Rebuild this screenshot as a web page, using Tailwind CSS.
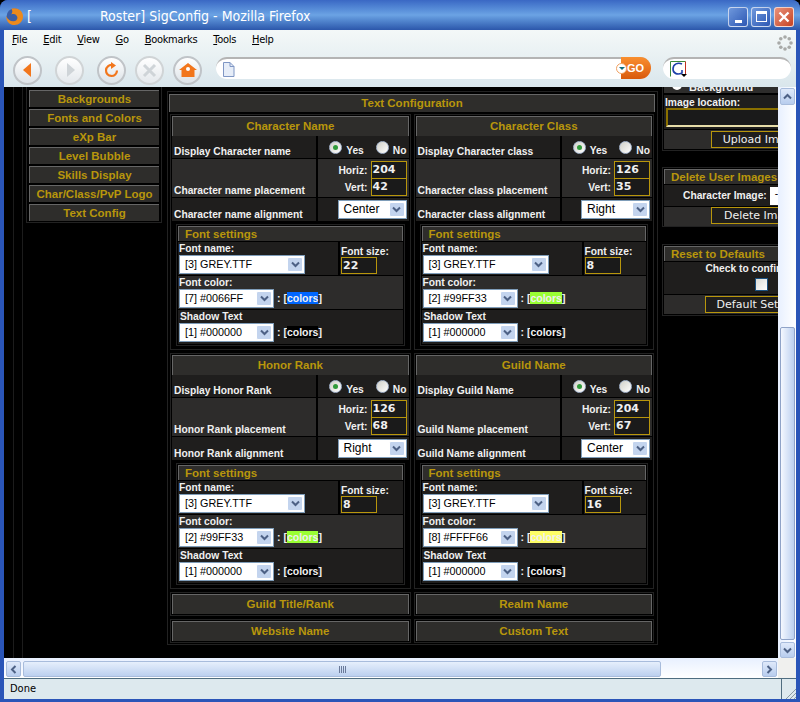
<!DOCTYPE html>
<html lang="en">
<head>
    <meta charset="UTF-8">
    <title>Roster SigConfig - Mozilla Firefox</title>
    <script src="https://cdn.jsdelivr.net/npm/@tailwindcss/browser@4"></script>
</head>
<body class="w-[800px] h-[702px] overflow-hidden bg-black font-['Liberation_Sans',sans-serif]">
<div class="w-[800px] h-[702px] flex flex-col overflow-hidden rounded-t-[8px] bg-[#2a55b8]">

    <!-- title bar -->
    <div class="h-[30px] shrink-0 flex items-center pt-[3px] pl-[6px] pr-[6px] bg-gradient-to-b from-[#3a68c4] via-[#6ba3e4] to-[#2c57ab]">
        <svg class="w-[17px] h-[17px] mr-[4px]" viewBox="0 0 16 16">
            <circle cx="8" cy="8" r="7.5" fill="#3b5fa8"/>
            <path d="M5 .8 C9 -1 16 1.5 16 8 C16 13 12 16 8 16 C3.5 16 0 12.5 .2 7.5 C1.5 10.5 3.5 12.5 7 12.5 C10.5 12.5 12 9 9.5 6.5 C8.5 5.5 6.5 5.5 5 6 C6.5 4 6 2 5 .8Z" fill="#ec8a1e"/>
        </svg>
        <span class="text-[14px] text-white w-[73px] font-['DejaVu_Sans_Condensed','DejaVu_Sans',sans-serif]">[</span>
        <span class="text-[14px] text-white font-['DejaVu_Sans_Condensed','DejaVu_Sans',sans-serif]">Roster] SigConfig - Mozilla Firefox</span>
        <div class="ml-auto flex gap-[3px]">
            <div class="w-[20px] h-[20px] rounded-[3px] border border-white/70 bg-gradient-to-br from-[#6f98dc] to-[#2e58b4] flex items-end justify-center pb-[3px]"><div class="w-[7px] h-[3px] bg-white"></div></div>
            <div class="w-[20px] h-[20px] rounded-[3px] border border-white/70 bg-gradient-to-br from-[#6f98dc] to-[#2e58b4] flex items-center justify-center"><div class="w-[11px] h-[11px] border border-white border-t-[3px]"></div></div>
            <div class="w-[20px] h-[20px] rounded-[3px] border border-white/70 bg-gradient-to-br from-[#e8917a] to-[#c5411f] flex items-center justify-center">
                <svg class="w-[12px] h-[12px]" viewBox="0 0 12 12"><path d="M1.5 1.5 L10.5 10.5 M10.5 1.5 L1.5 10.5" stroke="#fff" stroke-width="2.4"/></svg>
            </div>
        </div>
    </div>

    <div class="h-[669px] shrink-0 mx-[4px] flex flex-col bg-[#dde9ee]">
        <!-- menu bar -->
        <div class="h-[25px] shrink-0 flex items-center pb-[4px] pl-[8px] gap-[16px] text-[11px] tracking-[-.3px] text-black bg-gradient-to-b from-[#f4f8f8] to-[#e9f1f3] font-['DejaVu_Sans_Condensed','DejaVu_Sans',sans-serif]">
            <span><u>F</u>ile</span>
            <span><u>E</u>dit</span>
            <span><u>V</u>iew</span>
            <span><u>G</u>o</span>
            <span><u>B</u>ookmarks</span>
            <span><u>T</u>ools</span>
            <span><u>H</u>elp</span>
            <svg class="ml-auto mr-[3px] mt-[4px] w-[16px] h-[16px]" viewBox="0 0 16 16" fill="#a8aaa8"><circle cx="8" cy="2" r="1.8"/><circle cx="12.2" cy="3.8" r="1.8"/><circle cx="14" cy="8" r="1.8"/><circle cx="12.2" cy="12.2" r="1.8"/><circle cx="8" cy="14" r="1.8"/><circle cx="3.8" cy="12.2" r="1.8"/><circle cx="2" cy="8" r="1.8"/><circle cx="3.8" cy="3.8" r="1.8"/></svg>
        </div>

        <!-- nav toolbar -->
        <div class="h-[32px] shrink-0 flex items-center pb-[2px] pl-[9px] bg-gradient-to-b from-[#e9f1f3] to-[#d9e6ec]">
            <div class="w-[29px] h-[29px] rounded-full border-2 border-[#c0c4c8] bg-gradient-to-b from-white to-[#dde3e8] flex items-center justify-center">
                <svg class="w-[14px] h-[16px]" viewBox="0 0 14 16"><path d="M10 1 V15 L2 8Z" fill="#f2761c"/></svg>
            </div>
            <div class="ml-[13px] w-[29px] h-[29px] rounded-full border-2 border-[#d0d4d6] bg-gradient-to-b from-white to-[#e4e8ec] flex items-center justify-center">
                <svg class="w-[14px] h-[16px]" viewBox="0 0 14 16"><path d="M4 1 V15 L12 8Z" fill="#cfd4d8"/></svg>
            </div>
            <div class="ml-[13px] w-[29px] h-[29px] rounded-full border-2 border-[#c0c4c8] bg-gradient-to-b from-white to-[#dde3e8] flex items-center justify-center">
                <svg class="w-[17px] h-[17px]" viewBox="0 0 17 17" fill="none"><path d="M14 8.5 A5.5 5.5 0 1 1 9 3" stroke="#f2761c" stroke-width="2.2"/><path d="M8 0 L13 3.5 L8 7Z" fill="#f2761c"/></svg>
            </div>
            <div class="ml-[9px] w-[29px] h-[29px] rounded-full border-2 border-[#d0d4d6] bg-gradient-to-b from-white to-[#e4e8ec] flex items-center justify-center">
                <svg class="w-[15px] h-[15px]" viewBox="0 0 15 15"><path d="M2 2 L13 13 M13 2 L2 13" stroke="#cfd4d8" stroke-width="3"/></svg>
            </div>
            <div class="ml-[9px] w-[29px] h-[29px] rounded-full border-2 border-[#c0c4c8] bg-gradient-to-b from-white to-[#dde3e8] flex items-center justify-center">
                <svg class="w-[18px] h-[16px]" viewBox="0 0 18 16"><path d="M9 1 L18 8 H15.5 V15 H2.5 V8 H0Z" fill="#f2761c"/><circle cx="9" cy="7" r="2" fill="#fff"/></svg>
            </div>
            <!-- address bar -->
            <div class="ml-[14px] self-start mt-[2px] w-[435px] h-[22px] rounded-[11px] bg-white border-t-2 border-[#b4b4b4] flex items-center pl-[6px] relative">
                <svg class="w-[13px] h-[15px]" viewBox="0 0 13 15"><path d="M1.5 .5 H8 L12 4.5 V14.5 H1.5Z" fill="#e6edf8" stroke="#7f96c4"/><path d="M8 .5 V4.5 H12" fill="none" stroke="#7f96c4"/></svg>
                <div class="absolute right-0 top-[-2px] h-[22px] w-[30px] rounded-r-[11px] bg-gradient-to-b from-[#f98f2f] to-[#d9590a] text-white text-[11px] font-bold flex items-center pl-[6px]">GO</div>
                <div class="absolute right-[24px] top-[4px] w-[11px] h-[11px] rounded-full bg-white border border-[#f2a060] flex items-center justify-center"><div class="border-x-[3px] border-x-transparent border-t-[3px] border-t-[#0d6d80]"></div></div>
            </div>
            <!-- search bar -->
            <div class="ml-[12px] self-start mt-[2px] w-[128px] h-[22px] rounded-[11px] bg-white border-t-2 border-[#b4b4b4] flex items-center pl-[7px]">
                <svg class="w-[17px] h-[17px]" viewBox="0 0 17 17" fill="none">
                    <path d="M.5 15.5 V.5 H15.5" stroke="#3a8a3a"/><path d="M15.5 .5 V13" stroke="#c03020"/>
                    <path d="M12 3 C8 1 3 3 3 8 C3 13 8 14 12 12 V9" stroke="#1c3fa8" stroke-width="1.6"/>
                    <path d="M11 13 H17 L14 16Z" fill="#000"/>
                </svg>
            </div>
        </div>

        <!-- page area with scrollbars -->
        <div class="h-[571px] shrink-0 flex">
            <div class="w-[774px] h-[571px] bg-black overflow-hidden flex">
                <!-- outer decorative table lines -->
                <div class="w-[10px] h-full ml-[9px] border-x border-[#1c1c1c] shrink-0"></div>
                <div class="shrink-0 ml-[3px] w-[136px] flex flex-col gap-[2px] self-start px-[2px] pt-[3px] pb-[1px] border-x border-b border-[#222] text-[11.5px] font-bold text-[#b8960c] text-center">
                    <div class="h-[17px] leading-[16px] bg-[#2e2d2b] border-t border-l border-[#666]">Backgrounds</div>
                    <div class="h-[17px] leading-[16px] bg-[#2e2d2b] border-t border-l border-[#666]">Fonts and Colors</div>
                    <div class="h-[17px] leading-[16px] bg-[#2e2d2b] border-t border-l border-[#666]">eXp Bar</div>
                    <div class="h-[17px] leading-[16px] bg-[#2e2d2b] border-t border-l border-[#666]">Level Bubble</div>
                    <div class="h-[17px] leading-[16px] bg-[#2e2d2b] border-t border-l border-[#666]">Skills Display</div>
                    <div class="h-[17px] leading-[16px] bg-[#2e2d2b] border-t border-l border-[#666]">Char/Class/PvP Logo</div>
                    <div class="h-[17px] leading-[16px] bg-[#2e2d2b] border-t border-l border-[#666]">Text Config</div>
                </div>

                <!-- text configuration panel -->
                <div class="shrink-0 ml-[5px] mt-[4px] w-[491px] h-[554px] border border-[#222] p-[1px] flex flex-col text-[#f0f0f0] text-[10.25px] leading-[13px] font-bold">
                    <div class="h-[18px] mt-[1px] mr-[1px] leading-[17px] text-center text-[11.5px] text-[#b8960c] bg-[#2e2d2b] border-t border-x border-[#666]">Text Configuration</div>
                    <div class="grid grid-cols-2 gap-x-[3px] mt-[2px] ml-[1px] mr-[2px]">

                        <!-- character name -->
                        <div class="h-[236px] border border-[#222] p-[1px]">
                            <div class="h-[20px] leading-[18px] text-center text-[11.5px] text-[#b8960c] bg-[#2e2d2b] border-t border-x border-[#666]">Character Name</div>
                            <div class="h-[22px] flex bg-[#1f1e1d]">
                                <div class="w-[146px] flex items-end pl-[2px] border-r-2 border-black whitespace-nowrap">Display Character name</div>
                                <div class="flex-1 flex items-center justify-end pr-[2px] gap-[4px]"><span class="w-[13px] h-[13px] rounded-full bg-gradient-to-br from-[#d0d0c8] to-white border border-[#a8b8d0] flex items-center justify-center"><span class="w-[5px] h-[5px] rounded-full bg-[#2f9a3a]"></span></span><span class="mt-[6px]">Yes</span><span class="ml-[8px] w-[13px] h-[13px] rounded-full bg-gradient-to-br from-[#d0d0c8] to-white border border-[#a8b8d0]"></span><span class="mt-[6px]">No</span></div>
                            </div>
                            <div class="h-[38px] flex bg-[#2d2c2b] mt-[1px]">
                                <div class="w-[146px] flex items-end pl-[2px] border-r-2 border-black whitespace-nowrap">Character name placement</div>
                                <div class="flex-1 flex flex-col items-end pt-[2px] pr-[2px]">
                                    <div class="flex items-center gap-[3px]"><span>Horiz:</span><span class="w-[36px] h-[18px] border border-[#b8960c] bg-[#1a1a1a] pl-[1px] text-[11px] leading-[16px] font-['DejaVu_Sans',sans-serif]">204</span></div>
                                    <div class="-mt-[1px] flex items-center gap-[3px]"><span>Vert:</span><span class="w-[36px] h-[18px] border border-[#b8960c] bg-[#1a1a1a] pl-[1px] text-[11px] leading-[16px] font-['DejaVu_Sans',sans-serif]">42</span></div>
                                </div>
                            </div>
                            <div class="h-[23px] flex bg-[#1f1e1d] mt-[1px]">
                                <div class="w-[146px] flex items-end pl-[2px] border-r-2 border-black whitespace-nowrap">Character name alignment</div>
                                <div class="flex-1 flex items-center justify-end pr-[2px]"><div class="w-[69px] h-[19px] bg-white border border-[#7f9db9] flex items-center justify-between pl-[5px] pr-[1px] text-[12px] font-normal text-black">Center<span class="w-[16px] h-[15px] rounded-[2px] border border-white bg-[#c3d4ee] text-[#4d6185] flex items-center justify-center"><svg class="w-[9px] h-[7px]" viewBox="0 0 9 7" fill="none"><path d="M1 1.5 L4.5 5 L8 1.5" stroke="currentColor" stroke-width="2"/></svg></span></div></div>
                            </div>
                            <div class="mx-[4px] mt-[3px] border border-[#222] p-[1px] bg-black">
                                <div class="h-[15px] leading-[14px] pl-[6px] text-[11.5px] text-[#b8960c] bg-[#2e2d2b] border-t border-x border-[#666]">Font settings</div>
                                <div class="h-[33px] flex bg-[#1f1e1d] mt-[1px]">
                                    <div class="w-[162px] pl-[1px] border-r-2 border-black">Font name:
                                        <div class="w-[126px] h-[19px] bg-white border border-[#7f9db9] flex items-center justify-between pl-[5px] pr-[1px] text-[10.8px] font-normal text-black">[3] GREY.TTF<span class="w-[16px] h-[15px] rounded-[2px] border border-white bg-[#c3d4ee] text-[#4d6185] flex items-center justify-center"><svg class="w-[9px] h-[7px]" viewBox="0 0 9 7" fill="none"><path d="M1 1.5 L4.5 5 L8 1.5" stroke="currentColor" stroke-width="2"/></svg></span></div>
                                    </div>
                                    <div class="pl-[1px] pt-[4px] leading-[11px]">Font size:<div class="w-[36px] h-[17px] border border-[#b8960c] bg-[#1a1a1a] pl-[1px] text-[11px] leading-[15px] font-['DejaVu_Sans',sans-serif]">22</div></div>
                                </div>
                                <div class="h-[33px] bg-[#2d2c2b] mt-[1px] pl-[1px]">Font color:
                                    <div class="flex items-center gap-[3px]"><div class="w-[95px] h-[19px] bg-white border border-[#7f9db9] flex items-center justify-between pl-[5px] pr-[1px] text-[10.8px] font-normal text-black">[7] #0066FF<span class="w-[16px] h-[15px] rounded-[2px] border border-white bg-[#c3d4ee] text-[#4d6185] flex items-center justify-center"><svg class="w-[9px] h-[7px]" viewBox="0 0 9 7" fill="none"><path d="M1 1.5 L4.5 5 L8 1.5" stroke="currentColor" stroke-width="2"/></svg></span></div><span class="text-[10.5px]">: [<span class="bg-[#0066ff]">colors</span>]</span></div>
                                </div>
                                <div class="h-[34px] bg-[#1f1e1d] mt-[1px] pl-[2px]">Shadow Text
                                    <div class="-ml-[1px] flex items-center gap-[3px]"><div class="w-[95px] h-[19px] bg-white border border-[#7f9db9] flex items-center justify-between pl-[5px] pr-[1px] text-[10.8px] font-normal text-black">[1] #000000<span class="w-[16px] h-[15px] rounded-[2px] border border-white bg-[#c3d4ee] text-[#4d6185] flex items-center justify-center"><svg class="w-[9px] h-[7px]" viewBox="0 0 9 7" fill="none"><path d="M1 1.5 L4.5 5 L8 1.5" stroke="currentColor" stroke-width="2"/></svg></span></div><span class="text-[10.5px]">: [<span class="bg-[#000000]">colors</span>]</span></div>
                                </div>
                            </div>
                        </div>

                        <!-- character class -->
                        <div class="h-[236px] border border-[#222] p-[1px]">
                            <div class="h-[20px] leading-[18px] text-center text-[11.5px] text-[#b8960c] bg-[#2e2d2b] border-t border-x border-[#666]">Character Class</div>
                            <div class="h-[22px] flex bg-[#1f1e1d]">
                                <div class="w-[146px] flex items-end pl-[2px] border-r-2 border-black whitespace-nowrap">Display Character class</div>
                                <div class="flex-1 flex items-center justify-end pr-[2px] gap-[4px]"><span class="w-[13px] h-[13px] rounded-full bg-gradient-to-br from-[#d0d0c8] to-white border border-[#a8b8d0] flex items-center justify-center"><span class="w-[5px] h-[5px] rounded-full bg-[#2f9a3a]"></span></span><span class="mt-[6px]">Yes</span><span class="ml-[8px] w-[13px] h-[13px] rounded-full bg-gradient-to-br from-[#d0d0c8] to-white border border-[#a8b8d0]"></span><span class="mt-[6px]">No</span></div>
                            </div>
                            <div class="h-[38px] flex bg-[#2d2c2b] mt-[1px]">
                                <div class="w-[146px] flex items-end pl-[2px] border-r-2 border-black whitespace-nowrap">Character class placement</div>
                                <div class="flex-1 flex flex-col items-end pt-[2px] pr-[2px]">
                                    <div class="flex items-center gap-[3px]"><span>Horiz:</span><span class="w-[36px] h-[18px] border border-[#b8960c] bg-[#1a1a1a] pl-[1px] text-[11px] leading-[16px] font-['DejaVu_Sans',sans-serif]">126</span></div>
                                    <div class="-mt-[1px] flex items-center gap-[3px]"><span>Vert:</span><span class="w-[36px] h-[18px] border border-[#b8960c] bg-[#1a1a1a] pl-[1px] text-[11px] leading-[16px] font-['DejaVu_Sans',sans-serif]">35</span></div>
                                </div>
                            </div>
                            <div class="h-[23px] flex bg-[#1f1e1d] mt-[1px]">
                                <div class="w-[146px] flex items-end pl-[2px] border-r-2 border-black whitespace-nowrap">Character class alignment</div>
                                <div class="flex-1 flex items-center justify-end pr-[2px]"><div class="w-[69px] h-[19px] bg-white border border-[#7f9db9] flex items-center justify-between pl-[5px] pr-[1px] text-[12px] font-normal text-black">Right<span class="w-[16px] h-[15px] rounded-[2px] border border-white bg-[#c3d4ee] text-[#4d6185] flex items-center justify-center"><svg class="w-[9px] h-[7px]" viewBox="0 0 9 7" fill="none"><path d="M1 1.5 L4.5 5 L8 1.5" stroke="currentColor" stroke-width="2"/></svg></span></div></div>
                            </div>
                            <div class="mx-[4px] mt-[3px] border border-[#222] p-[1px] bg-black">
                                <div class="h-[15px] leading-[14px] pl-[6px] text-[11.5px] text-[#b8960c] bg-[#2e2d2b] border-t border-x border-[#666]">Font settings</div>
                                <div class="h-[33px] flex bg-[#1f1e1d] mt-[1px]">
                                    <div class="w-[162px] pl-[1px] border-r-2 border-black">Font name:
                                        <div class="w-[126px] h-[19px] bg-white border border-[#7f9db9] flex items-center justify-between pl-[5px] pr-[1px] text-[10.8px] font-normal text-black">[3] GREY.TTF<span class="w-[16px] h-[15px] rounded-[2px] border border-white bg-[#c3d4ee] text-[#4d6185] flex items-center justify-center"><svg class="w-[9px] h-[7px]" viewBox="0 0 9 7" fill="none"><path d="M1 1.5 L4.5 5 L8 1.5" stroke="currentColor" stroke-width="2"/></svg></span></div>
                                    </div>
                                    <div class="pl-[1px] pt-[4px] leading-[11px]">Font size:<div class="w-[36px] h-[17px] border border-[#b8960c] bg-[#1a1a1a] pl-[1px] text-[11px] leading-[15px] font-['DejaVu_Sans',sans-serif]">8</div></div>
                                </div>
                                <div class="h-[33px] bg-[#2d2c2b] mt-[1px] pl-[1px]">Font color:
                                    <div class="flex items-center gap-[3px]"><div class="w-[95px] h-[19px] bg-white border border-[#7f9db9] flex items-center justify-between pl-[5px] pr-[1px] text-[10.8px] font-normal text-black">[2] #99FF33<span class="w-[16px] h-[15px] rounded-[2px] border border-white bg-[#c3d4ee] text-[#4d6185] flex items-center justify-center"><svg class="w-[9px] h-[7px]" viewBox="0 0 9 7" fill="none"><path d="M1 1.5 L4.5 5 L8 1.5" stroke="currentColor" stroke-width="2"/></svg></span></div><span class="text-[10.5px]">: [<span class="bg-[#99ff33]">colors</span>]</span></div>
                                </div>
                                <div class="h-[34px] bg-[#1f1e1d] mt-[1px] pl-[2px]">Shadow Text
                                    <div class="-ml-[1px] flex items-center gap-[3px]"><div class="w-[95px] h-[19px] bg-white border border-[#7f9db9] flex items-center justify-between pl-[5px] pr-[1px] text-[10.8px] font-normal text-black">[1] #000000<span class="w-[16px] h-[15px] rounded-[2px] border border-white bg-[#c3d4ee] text-[#4d6185] flex items-center justify-center"><svg class="w-[9px] h-[7px]" viewBox="0 0 9 7" fill="none"><path d="M1 1.5 L4.5 5 L8 1.5" stroke="currentColor" stroke-width="2"/></svg></span></div><span class="text-[10.5px]">: [<span class="bg-[#000000]">colors</span>]</span></div>
                                </div>
                            </div>
                        </div>

                        <!-- honor rank -->
                        <div class="h-[236px] mt-[3px] border border-[#222] p-[1px]">
                            <div class="h-[20px] leading-[18px] text-center text-[11.5px] text-[#b8960c] bg-[#2e2d2b] border-t border-x border-[#666]">Honor Rank</div>
                            <div class="h-[22px] flex bg-[#1f1e1d]">
                                <div class="w-[146px] flex items-end pl-[2px] border-r-2 border-black whitespace-nowrap">Display Honor Rank</div>
                                <div class="flex-1 flex items-center justify-end pr-[2px] gap-[4px]"><span class="w-[13px] h-[13px] rounded-full bg-gradient-to-br from-[#d0d0c8] to-white border border-[#a8b8d0] flex items-center justify-center"><span class="w-[5px] h-[5px] rounded-full bg-[#2f9a3a]"></span></span><span class="mt-[6px]">Yes</span><span class="ml-[8px] w-[13px] h-[13px] rounded-full bg-gradient-to-br from-[#d0d0c8] to-white border border-[#a8b8d0]"></span><span class="mt-[6px]">No</span></div>
                            </div>
                            <div class="h-[38px] flex bg-[#2d2c2b] mt-[1px]">
                                <div class="w-[146px] flex items-end pl-[2px] border-r-2 border-black whitespace-nowrap">Honor Rank placement</div>
                                <div class="flex-1 flex flex-col items-end pt-[2px] pr-[2px]">
                                    <div class="flex items-center gap-[3px]"><span>Horiz:</span><span class="w-[36px] h-[18px] border border-[#b8960c] bg-[#1a1a1a] pl-[1px] text-[11px] leading-[16px] font-['DejaVu_Sans',sans-serif]">126</span></div>
                                    <div class="-mt-[1px] flex items-center gap-[3px]"><span>Vert:</span><span class="w-[36px] h-[18px] border border-[#b8960c] bg-[#1a1a1a] pl-[1px] text-[11px] leading-[16px] font-['DejaVu_Sans',sans-serif]">68</span></div>
                                </div>
                            </div>
                            <div class="h-[23px] flex bg-[#1f1e1d] mt-[1px]">
                                <div class="w-[146px] flex items-end pl-[2px] border-r-2 border-black whitespace-nowrap">Honor Rank alignment</div>
                                <div class="flex-1 flex items-center justify-end pr-[2px]"><div class="w-[69px] h-[19px] bg-white border border-[#7f9db9] flex items-center justify-between pl-[5px] pr-[1px] text-[12px] font-normal text-black">Right<span class="w-[16px] h-[15px] rounded-[2px] border border-white bg-[#c3d4ee] text-[#4d6185] flex items-center justify-center"><svg class="w-[9px] h-[7px]" viewBox="0 0 9 7" fill="none"><path d="M1 1.5 L4.5 5 L8 1.5" stroke="currentColor" stroke-width="2"/></svg></span></div></div>
                            </div>
                            <div class="mx-[4px] mt-[3px] border border-[#222] p-[1px] bg-black">
                                <div class="h-[15px] leading-[14px] pl-[6px] text-[11.5px] text-[#b8960c] bg-[#2e2d2b] border-t border-x border-[#666]">Font settings</div>
                                <div class="h-[33px] flex bg-[#1f1e1d] mt-[1px]">
                                    <div class="w-[162px] pl-[1px] border-r-2 border-black">Font name:
                                        <div class="w-[126px] h-[19px] bg-white border border-[#7f9db9] flex items-center justify-between pl-[5px] pr-[1px] text-[10.8px] font-normal text-black">[3] GREY.TTF<span class="w-[16px] h-[15px] rounded-[2px] border border-white bg-[#c3d4ee] text-[#4d6185] flex items-center justify-center"><svg class="w-[9px] h-[7px]" viewBox="0 0 9 7" fill="none"><path d="M1 1.5 L4.5 5 L8 1.5" stroke="currentColor" stroke-width="2"/></svg></span></div>
                                    </div>
                                    <div class="pl-[1px] pt-[4px] leading-[11px]">Font size:<div class="w-[36px] h-[17px] border border-[#b8960c] bg-[#1a1a1a] pl-[1px] text-[11px] leading-[15px] font-['DejaVu_Sans',sans-serif]">8</div></div>
                                </div>
                                <div class="h-[33px] bg-[#2d2c2b] mt-[1px] pl-[1px]">Font color:
                                    <div class="flex items-center gap-[3px]"><div class="w-[95px] h-[19px] bg-white border border-[#7f9db9] flex items-center justify-between pl-[5px] pr-[1px] text-[10.8px] font-normal text-black">[2] #99FF33<span class="w-[16px] h-[15px] rounded-[2px] border border-white bg-[#c3d4ee] text-[#4d6185] flex items-center justify-center"><svg class="w-[9px] h-[7px]" viewBox="0 0 9 7" fill="none"><path d="M1 1.5 L4.5 5 L8 1.5" stroke="currentColor" stroke-width="2"/></svg></span></div><span class="text-[10.5px]">: [<span class="bg-[#99ff33]">colors</span>]</span></div>
                                </div>
                                <div class="h-[34px] bg-[#1f1e1d] mt-[1px] pl-[2px]">Shadow Text
                                    <div class="-ml-[1px] flex items-center gap-[3px]"><div class="w-[95px] h-[19px] bg-white border border-[#7f9db9] flex items-center justify-between pl-[5px] pr-[1px] text-[10.8px] font-normal text-black">[1] #000000<span class="w-[16px] h-[15px] rounded-[2px] border border-white bg-[#c3d4ee] text-[#4d6185] flex items-center justify-center"><svg class="w-[9px] h-[7px]" viewBox="0 0 9 7" fill="none"><path d="M1 1.5 L4.5 5 L8 1.5" stroke="currentColor" stroke-width="2"/></svg></span></div><span class="text-[10.5px]">: [<span class="bg-[#000000]">colors</span>]</span></div>
                                </div>
                            </div>
                        </div>

                        <!-- guild name -->
                        <div class="h-[236px] mt-[3px] border border-[#222] p-[1px]">
                            <div class="h-[20px] leading-[18px] text-center text-[11.5px] text-[#b8960c] bg-[#2e2d2b] border-t border-x border-[#666]">Guild Name</div>
                            <div class="h-[22px] flex bg-[#1f1e1d]">
                                <div class="w-[146px] flex items-end pl-[2px] border-r-2 border-black whitespace-nowrap">Display Guild Name</div>
                                <div class="flex-1 flex items-center justify-end pr-[2px] gap-[4px]"><span class="w-[13px] h-[13px] rounded-full bg-gradient-to-br from-[#d0d0c8] to-white border border-[#a8b8d0] flex items-center justify-center"><span class="w-[5px] h-[5px] rounded-full bg-[#2f9a3a]"></span></span><span class="mt-[6px]">Yes</span><span class="ml-[8px] w-[13px] h-[13px] rounded-full bg-gradient-to-br from-[#d0d0c8] to-white border border-[#a8b8d0]"></span><span class="mt-[6px]">No</span></div>
                            </div>
                            <div class="h-[38px] flex bg-[#2d2c2b] mt-[1px]">
                                <div class="w-[146px] flex items-end pl-[2px] border-r-2 border-black whitespace-nowrap">Guild Name placement</div>
                                <div class="flex-1 flex flex-col items-end pt-[2px] pr-[2px]">
                                    <div class="flex items-center gap-[3px]"><span>Horiz:</span><span class="w-[36px] h-[18px] border border-[#b8960c] bg-[#1a1a1a] pl-[1px] text-[11px] leading-[16px] font-['DejaVu_Sans',sans-serif]">204</span></div>
                                    <div class="-mt-[1px] flex items-center gap-[3px]"><span>Vert:</span><span class="w-[36px] h-[18px] border border-[#b8960c] bg-[#1a1a1a] pl-[1px] text-[11px] leading-[16px] font-['DejaVu_Sans',sans-serif]">67</span></div>
                                </div>
                            </div>
                            <div class="h-[23px] flex bg-[#1f1e1d] mt-[1px]">
                                <div class="w-[146px] flex items-end pl-[2px] border-r-2 border-black whitespace-nowrap">Guild Name alignment</div>
                                <div class="flex-1 flex items-center justify-end pr-[2px]"><div class="w-[69px] h-[19px] bg-white border border-[#7f9db9] flex items-center justify-between pl-[5px] pr-[1px] text-[12px] font-normal text-black">Center<span class="w-[16px] h-[15px] rounded-[2px] border border-white bg-[#c3d4ee] text-[#4d6185] flex items-center justify-center"><svg class="w-[9px] h-[7px]" viewBox="0 0 9 7" fill="none"><path d="M1 1.5 L4.5 5 L8 1.5" stroke="currentColor" stroke-width="2"/></svg></span></div></div>
                            </div>
                            <div class="mx-[4px] mt-[3px] border border-[#222] p-[1px] bg-black">
                                <div class="h-[15px] leading-[14px] pl-[6px] text-[11.5px] text-[#b8960c] bg-[#2e2d2b] border-t border-x border-[#666]">Font settings</div>
                                <div class="h-[33px] flex bg-[#1f1e1d] mt-[1px]">
                                    <div class="w-[162px] pl-[1px] border-r-2 border-black">Font name:
                                        <div class="w-[126px] h-[19px] bg-white border border-[#7f9db9] flex items-center justify-between pl-[5px] pr-[1px] text-[10.8px] font-normal text-black">[3] GREY.TTF<span class="w-[16px] h-[15px] rounded-[2px] border border-white bg-[#c3d4ee] text-[#4d6185] flex items-center justify-center"><svg class="w-[9px] h-[7px]" viewBox="0 0 9 7" fill="none"><path d="M1 1.5 L4.5 5 L8 1.5" stroke="currentColor" stroke-width="2"/></svg></span></div>
                                    </div>
                                    <div class="pl-[1px] pt-[4px] leading-[11px]">Font size:<div class="w-[36px] h-[17px] border border-[#b8960c] bg-[#1a1a1a] pl-[1px] text-[11px] leading-[15px] font-['DejaVu_Sans',sans-serif]">16</div></div>
                                </div>
                                <div class="h-[33px] bg-[#2d2c2b] mt-[1px] pl-[1px]">Font color:
                                    <div class="flex items-center gap-[3px]"><div class="w-[95px] h-[19px] bg-white border border-[#7f9db9] flex items-center justify-between pl-[5px] pr-[1px] text-[10.8px] font-normal text-black">[8] #FFFF66<span class="w-[16px] h-[15px] rounded-[2px] border border-white bg-[#c3d4ee] text-[#4d6185] flex items-center justify-center"><svg class="w-[9px] h-[7px]" viewBox="0 0 9 7" fill="none"><path d="M1 1.5 L4.5 5 L8 1.5" stroke="currentColor" stroke-width="2"/></svg></span></div><span class="text-[10.5px]">: [<span class="bg-[#ffff66]">colors</span>]</span></div>
                                </div>
                                <div class="h-[34px] bg-[#1f1e1d] mt-[1px] pl-[2px]">Shadow Text
                                    <div class="-ml-[1px] flex items-center gap-[3px]"><div class="w-[95px] h-[19px] bg-white border border-[#7f9db9] flex items-center justify-between pl-[5px] pr-[1px] text-[10.8px] font-normal text-black">[1] #000000<span class="w-[16px] h-[15px] rounded-[2px] border border-white bg-[#c3d4ee] text-[#4d6185] flex items-center justify-center"><svg class="w-[9px] h-[7px]" viewBox="0 0 9 7" fill="none"><path d="M1 1.5 L4.5 5 L8 1.5" stroke="currentColor" stroke-width="2"/></svg></span></div><span class="text-[10.5px]">: [<span class="bg-[#000000]">colors</span>]</span></div>
                                </div>
                            </div>
                        </div>

                        <!-- collapsed sections -->
                        <div class="h-[24px] mt-[3px] border border-[#222] p-[1px]"><div class="h-[20px] leading-[18px] text-center text-[11.5px] text-[#b8960c] bg-[#2e2d2b] border-t border-x border-[#666]">Guild Title/Rank</div></div>
                        <div class="h-[24px] mt-[3px] border border-[#222] p-[1px]"><div class="h-[20px] leading-[18px] text-center text-[11.5px] text-[#b8960c] bg-[#2e2d2b] border-t border-x border-[#666]">Realm Name</div></div>
                        <div class="h-[24px] mt-[3px] border border-[#222] p-[1px]"><div class="h-[20px] leading-[18px] text-center text-[11.5px] text-[#b8960c] bg-[#2e2d2b] border-t border-x border-[#666]">Website Name</div></div>
                        <div class="h-[24px] mt-[3px] border border-[#222] p-[1px]"><div class="h-[20px] leading-[18px] text-center text-[11.5px] text-[#b8960c] bg-[#2e2d2b] border-t border-x border-[#666]">Custom Text</div></div>
                    </div>
                </div>

                <!-- right column, runs off the scrollport -->
                <div class="shrink-0 ml-[4px] w-[198px] flex flex-col text-[#f0f0f0] text-[10.25px] leading-[13px] font-bold">
                    <div class="h-[64px] border-x border-b border-[#222] px-[1px]">
                        <div class="h-[6px] overflow-hidden bg-[#2d2c2b] flex items-end">
                            <span class="ml-[8px] mb-[3px] w-[10px] h-[10px] shrink-0 rounded-full bg-white"></span>
                            <span class="ml-[7px] -mb-[1px] text-[11px]">Background</span>
                        </div>
                        <div class="h-[34px] mt-[2px] bg-[#1f1e1d] pt-[2px] pl-[1px] leading-[11px]">Image location:
                            <div class="h-[19px] ml-[1px] border-2 border-[#8a7000] border-b-[#e6dca8] border-r-[#e6dca8] bg-[#1a1a1a]"></div>
                        </div>
                        <div class="h-[19px] mt-[1px] bg-[#2d2c2b] flex justify-center pt-[1px]"><div class="w-[100px] h-[17px] border border-[#b8960c] bg-[#1f1e1d] text-[11px] font-normal leading-[15px] text-center font-['DejaVu_Sans',sans-serif]">Upload Image</div></div>
                    </div>
                    <div class="h-[60px] mt-[16px] border border-[#222] p-[1px]">
                        <div class="h-[15px] leading-[14px] pl-[6px] text-[11.5px] text-[#b8960c] bg-[#2e2d2b] border-t border-l border-[#666] whitespace-nowrap">Delete User Images</div>
                        <div class="h-[21px] mt-[1px] bg-[#1f1e1d] flex items-center pl-[19px] gap-[3px]">Character Image:<div class="w-[60px] h-[18px] bg-white text-black font-normal pl-[5px]">-</div></div>
                        <div class="h-[19px] mt-[1px] bg-[#2d2c2b] flex justify-center"><div class="w-[100px] h-[17px] border border-[#b8960c] bg-[#1f1e1d] text-[11px] font-normal leading-[15px] text-center font-['DejaVu_Sans',sans-serif]">Delete Image</div></div>
                    </div>
                    <div class="h-[72px] mt-[17px] border border-[#222] p-[1px]">
                        <div class="h-[15px] leading-[14px] pl-[6px] text-[11.5px] text-[#b8960c] bg-[#2e2d2b] border-t border-l border-[#666]">Reset to Defaults</div>
                        <div class="h-[32px] mt-[1px] bg-[#1f1e1d] flex flex-col items-center">Check to confirm reset
                            <div class="w-[13px] h-[13px] mt-[3px] border border-[#1c5180] bg-gradient-to-br from-[#dcdcd7] to-white"></div>
                        </div>
                        <div class="h-[19px] mt-[1px] bg-[#2d2c2b] flex justify-center pt-[1px]"><div class="w-[113px] h-[17px] border border-[#b8960c] bg-[#1f1e1d] text-[11px] font-normal leading-[15px] text-center font-['DejaVu_Sans',sans-serif]">Default Settings</div></div>
                    </div>
                </div>
            </div>

            <!-- vertical scrollbar -->
            <div class="w-[18px] h-[571px] bg-gradient-to-r from-[#e8f0ff] to-white flex flex-col items-center pt-[1px] pl-[1px]">
                <div class="w-[15px] h-[17px] rounded-[2px] border border-[#a8bcdc] bg-gradient-to-b from-[#dfe9fa] to-[#b8cdee] text-[#4d6185] flex items-center justify-center"><svg class="w-[9px] h-[7px]" viewBox="0 0 9 7" fill="none"><path d="M1 5.5 L4.5 2 L8 5.5" stroke="currentColor" stroke-width="2"/></svg></div>
                <div class="w-[15px] h-[313px] mt-[222px] rounded-[2px] border border-[#8fa3c8] bg-gradient-to-r from-[#f4f8ff] to-[#bcd0ef]"></div>
                <div class="w-[15px] h-[16px] mt-auto rounded-[2px] border border-[#a8bcdc] bg-gradient-to-b from-[#dfe9fa] to-[#b8cdee] text-[#4d6185] flex items-center justify-center"><svg class="w-[9px] h-[7px]" viewBox="0 0 9 7" fill="none"><path d="M1 1.5 L4.5 5 L8 1.5" stroke="currentColor" stroke-width="2"/></svg></div>
            </div>
        </div>

        <!-- horizontal scrollbar -->
        <div class="h-[20px] shrink-0 flex items-end bg-gradient-to-b from-[#e8f0ff] to-white">
            <div class="w-[15px] h-[16px] mb-[1px] ml-[2px] rounded-[2px] border border-[#a8bcdc] bg-gradient-to-b from-[#dfe9fa] to-[#b8cdee] text-[#4d6185] flex items-center justify-center"><svg class="w-[7px] h-[9px]" viewBox="0 0 7 9" fill="none"><path d="M5.5 1 L2 4.5 L5.5 8" stroke="currentColor" stroke-width="2"/></svg></div>
            <div class="w-[638px] h-[16px] mb-[1px] ml-[2px] rounded-[2px] border border-[#a8bcdc] bg-gradient-to-b from-[#e6effc] to-[#bcd0ef] flex items-center justify-center gap-[1px]"><span class="w-[1px] h-[7px] bg-[#6a7a9a]"></span><span class="w-[1px] h-[7px] bg-[#6a7a9a]"></span><span class="w-[1px] h-[7px] bg-[#6a7a9a]"></span><span class="w-[1px] h-[7px] bg-[#6a7a9a]"></span></div>
            <div class="w-[15px] h-[16px] mb-[1px] ml-auto mr-[1px] rounded-[2px] border border-[#a8bcdc] bg-gradient-to-b from-[#dfe9fa] to-[#b8cdee] text-[#4d6185] flex items-center justify-center"><svg class="w-[7px] h-[9px]" viewBox="0 0 7 9" fill="none"><path d="M1.5 1 L5 4.5 L1.5 8" stroke="currentColor" stroke-width="2"/></svg></div>
            <div class="w-[18px] h-[20px] bg-[#f0f0ee]"></div>
        </div>

        <!-- status bar -->
        <div class="h-[21px] shrink-0 border-t border-[#4f6d80] bg-[#dde9ee] flex items-center pl-[6px] text-[11px] text-black font-['DejaVu_Sans_Condensed','DejaVu_Sans',sans-serif]">
            Done
            <div class="ml-auto w-[15px] h-full border-l border-[#4f6d80] flex items-end justify-end">
                <svg class="w-[11px] h-[11px]" viewBox="0 0 11 11" fill="none"><path d="M1 11 L11 1 M5 11 L11 5 M9 11 L11 9" stroke="#8a9aa4"/></svg>
            </div>
        </div>
    </div>
</div>
</body>
</html>
